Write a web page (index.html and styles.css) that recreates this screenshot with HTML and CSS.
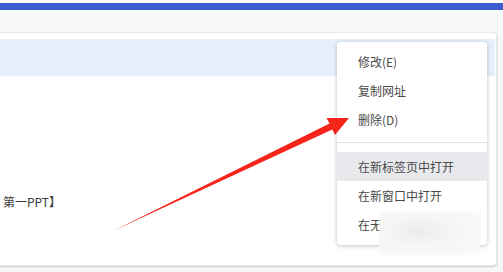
FILE: index.html
```html
<!DOCTYPE html>
<html lang="zh-CN">
<head>
  <meta charset="UTF-8" />
  <title>收藏夹</title>
  <link rel="stylesheet" href="styles.css">
</head>
<body>

<div class="topbar"></div>

<div class="page">
  <div class="card">
    <div class="row-selected"></div>
    <div class="row-text">第一PPT】</div>
  </div>

  <!-- right-click menu -->
  <ul class="menu">
    <li>修改(E)</li>
    <li>复制网址</li>
    <li>删除(D)</li>
    <li class="sep"></li>
    <li class="hover">在新标签页中打开</li>
    <li>在新窗口中打开</li>
    <li>在无痕窗口中打开</li>
  </ul>
  <div class="smudge"></div>

  <svg class="arrow" width="503" height="272" viewBox="0 0 503 272">
    <polygon points="113,231 329.5,123.5 326.5,118 349,118 335,135 332.3,129.5" fill="#f5251c"/>
  </svg>
</div>

</body>
</html>
```

FILE: styles.css
```css
* {
  box-sizing: border-box;
}

body {
  margin: 0;
  font-family: "Noto Sans CJK SC", "Noto Sans", sans-serif;
  background: #fff;
  width: 503px;
  height: 272px;
  overflow: hidden;
}

.topbar {
  margin-top: 3px;
  height: 7px;
  background: #3d5bd3;
}

.page {
  position: relative;
  background: #f6f7f9;
  padding: 22px 6px 0 0;
  height: 262px;
}

.card {
  margin-left: -6px;
  height: 234px;
  background: #fff;
  border: 1px solid #e6e7ea;
  border-radius: 4px;
  box-shadow: 0 1px 2px rgba(0,0,0,0.18);
  padding: 6px 1px 0 0;
}

.row-selected {
  height: 37px;
  background: #e7effc;
}

.row-text {
  margin-top: 116px;
  padding-left: 8px;
  font-size: 12px;
  line-height: 20px;
  color: #3a3a3a;
}

.menu {
  position: absolute;
  left: 337px;
  top: 32px;
  width: 150px;
  margin: 0;
  padding: 5px 0 6px;
  list-style: none;
  background: #fff;
  border-radius: 4px;
  box-shadow: 0 1px 4px rgba(0,0,0,0.25);
}

.menu li {
  height: 29px;
  line-height: 29px;
  padding-left: 21px;
  font-size: 12px;
  color: #4a4a4a;
}

.menu li.sep {
  height: 1px;
  margin: 8px 0 9px;
  background: #e3e3e3;
}

.menu li.hover {
  background: #e8e9ec;
}

.smudge {
  position: absolute;
  left: 379px;
  top: 202px;
  width: 101px;
  height: 43px;
  background: radial-gradient(ellipse at 40% 45%, #ececec 0%, #f6f6f6 45%, #fafafa 100%);
  filter: blur(1px);
}

.arrow {
  position: absolute;
  left: 0;
  top: -10px;
}
```
